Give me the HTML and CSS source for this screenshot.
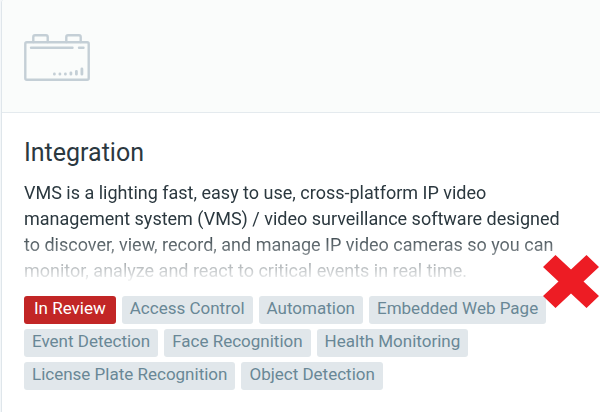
FILE: index.html
```
<!DOCTYPE html>
<html lang="en">
<head>
    <meta charset="UTF-8">
    <meta name="viewport" content="width=device-width, initial-scale=1.0">
    <title>Integration</title>
    <link rel="stylesheet" href="styles.css">
</head>
<body>
    <div class="card">
        <div class="card-header">
            <svg class="card-icon" width="66" height="48" viewBox="0 0 66 48" fill="none" stroke="#c4cfd6" stroke-width="2.4" stroke-linecap="round" stroke-linejoin="round" aria-hidden="true">
                <rect x="1.3" y="8.3" width="63.4" height="37.4" rx="1.5"/>
                <path d="M9.3 8V3Q9.3 1.3 11 1.3H22Q23.7 1.3 23.7 3V8M42.3 8V3Q42.3 1.3 44 1.3H55Q56.7 1.3 56.7 3V8"/>
                <path d="M7 13.8H48.5M55 13.8H59.5"/>
                <path d="M30.4 40V40.2M35.9 40V40.2M41.4 40V40.2M46.9 38.8V40.2M52.4 37.3V40.2M57.9 35V40.2" stroke-width="2.8"/>
            </svg>
        </div>
        <div class="card-body">
            <h1 class="card-title">Integration</h1>
            <p class="card-text">VMS is a lighting fast, easy to use, cross-platform IP video management system (VMS) / video surveillance software designed to discover, view, record, and manage IP video cameras so you can monitor, analyze and react to critical events in real time.</p>
            <div class="tags">
                <span class="tag tag-review">In Review</span>
                <span class="tag">Access Control</span>
                <span class="tag">Automation</span>
                <span class="tag">Embedded Web Page</span>
                <span class="tag">Event Detection</span>
                <span class="tag">Face Recognition</span>
                <span class="tag">Health Monitoring</span>
                <span class="tag">License Plate Recognition</span>
                <span class="tag">Object Detection</span>
            </div>
        </div>
        <svg class="cross" width="56" height="54" viewBox="0 0 56 54" aria-hidden="true">
            <path fill="#ed1c24" d="M12.500 0L28 14.500L43.500 0L56 12L40.500 26.500L56 41L43.500 53L28 38.500L12.500 53L0 41L15.500 26.500L0 12Z"/>
        </svg>
    </div>
</body>
</html>
```
FILE: styles.css
```
body {
    font-family: Roboto, "Liberation Sans", sans-serif;
    margin: 0;
    padding: 0 0 0 1px;
    background-color: #f4f7f9;
    color: #2b383f;
}
.card {
    position: relative;
    min-height: 100vh;
    box-sizing: border-box;
    background-color: #fff;
    border-left: 1px solid #dfe6eb;
    border-top-left-radius: 3px;
}
.card-header {
    padding: 34px 22px 30px;
    background-color: #fafcfb;
    border-bottom: 1px solid #e4eaee;
    border-top-left-radius: 3px;
}
.card-icon {
    display: block;
}
.card-body {
    padding: 24px 22px;
}
.card-title {
    margin: 0 0 11px;
    font-size: 25px;
    font-weight: 400;
    line-height: 32px;
}
.card-text {
    margin: 0 0 12px;
    font-size: 18px;
    line-height: 26px;
    -webkit-mask-image: linear-gradient(#000 50%, transparent);
    mask-image: linear-gradient(#000 50%, transparent);
}
.tags {
    display: flex;
    flex-wrap: wrap;
    gap: 5px 6px;
}
.tag {
    padding: 0 8px 4px;
    border-radius: 3px;
    background-color: #e1e7eb;
    color: #698796;
    font-size: 17px;
    line-height: 24px;
}
.tag-review {
    padding: 0 10px 4px;
    background-color: #c22626;
    color: #fff;
}
.cross {
    position: absolute;
    right: 1px;
    top: 255px;
}
```
